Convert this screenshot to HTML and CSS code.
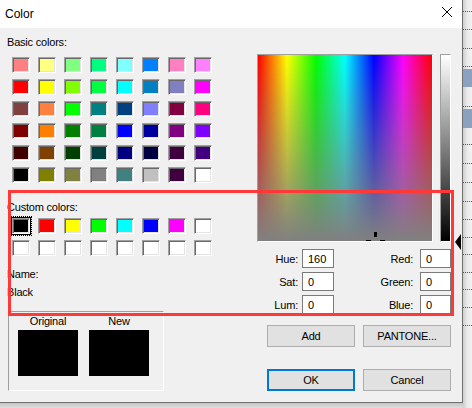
FILE: index.html
```html
<!DOCTYPE html>
<html>
<head>
<meta charset="utf-8">
<link rel="stylesheet" href="styles.css">
</head>
<body>
<div class="screen">
  <div class="main">
    <div class="dialog">
      <div class="titlebar">
        <span class="title">Color</span>
        <svg class="close" viewBox="0 0 10 10" shape-rendering="crispEdges"><path d="M0 0L10 10M10 0L0 10" stroke="#000" stroke-width="1" fill="none"/></svg>
      </div>
      <div class="content">
        <div class="left">
          <div class="label">Basic colors:</div>
          <div class="swatches basic">
            <span class="sw" style="background:#ff8080"></span><span class="sw" style="background:#ffff80"></span><span class="sw" style="background:#80ff80"></span><span class="sw" style="background:#00ff80"></span><span class="sw" style="background:#80ffff"></span><span class="sw" style="background:#0080ff"></span><span class="sw" style="background:#ff80c0"></span><span class="sw" style="background:#ff80ff"></span>
            <span class="sw" style="background:#ff0000"></span><span class="sw" style="background:#ffff00"></span><span class="sw" style="background:#80ff00"></span><span class="sw" style="background:#00ff40"></span><span class="sw" style="background:#00ffff"></span><span class="sw" style="background:#0080c0"></span><span class="sw" style="background:#8080c0"></span><span class="sw" style="background:#ff00ff"></span>
            <span class="sw" style="background:#804040"></span><span class="sw" style="background:#ff8040"></span><span class="sw" style="background:#00ff00"></span><span class="sw" style="background:#008080"></span><span class="sw" style="background:#004080"></span><span class="sw" style="background:#8080ff"></span><span class="sw" style="background:#800040"></span><span class="sw" style="background:#ff0080"></span>
            <span class="sw" style="background:#800000"></span><span class="sw" style="background:#ff8000"></span><span class="sw" style="background:#008000"></span><span class="sw" style="background:#008040"></span><span class="sw" style="background:#0000ff"></span><span class="sw" style="background:#0000a0"></span><span class="sw" style="background:#800080"></span><span class="sw" style="background:#8000ff"></span>
            <span class="sw" style="background:#400000"></span><span class="sw" style="background:#804000"></span><span class="sw" style="background:#004000"></span><span class="sw" style="background:#004040"></span><span class="sw" style="background:#000080"></span><span class="sw" style="background:#000040"></span><span class="sw" style="background:#400040"></span><span class="sw" style="background:#400080"></span>
            <span class="sw" style="background:#000000"></span><span class="sw" style="background:#808000"></span><span class="sw" style="background:#808040"></span><span class="sw" style="background:#808080"></span><span class="sw" style="background:#408080"></span><span class="sw" style="background:#c0c0c0"></span><span class="sw" style="background:#400040"></span><span class="sw" style="background:#ffffff"></span>
          </div>
          <div class="label lbl-custom">Custom colors:</div>
          <div class="swatches custom">
            <span class="sw sel" style="background:#000000"></span><span class="sw" style="background:#ff0000"></span><span class="sw" style="background:#ffff00"></span><span class="sw" style="background:#00ff00"></span><span class="sw" style="background:#00ffff"></span><span class="sw" style="background:#0000ff"></span><span class="sw" style="background:#ff00ff"></span><span class="sw" style="background:#ffffff"></span>
            <span class="sw" style="background:#ffffff"></span><span class="sw" style="background:#ffffff"></span><span class="sw" style="background:#ffffff"></span><span class="sw" style="background:#ffffff"></span><span class="sw" style="background:#ffffff"></span><span class="sw" style="background:#ffffff"></span><span class="sw" style="background:#ffffff"></span><span class="sw" style="background:#ffffff"></span>
          </div>
          <div class="label lbl-name">Name:</div>
          <div class="label lbl-black">Black</div>
          <div class="group">
            <div class="preview"><div class="plabel">Original</div><div class="pbox"></div></div>
            <div class="preview"><div class="plabel">New</div><div class="pbox"></div></div>
          </div>
        </div>
        <div class="right">
          <div class="pickers">
            <div class="spectrum">
              <i class="cross cross-t"></i><i class="cross cross-l"></i><i class="cross cross-r"></i>
            </div>
            <div class="lumwrap"><div class="lum"></div><i class="pointer"></i></div>
          </div>
          <div class="fields">
            <div class="flabel fa">Hue:</div><div class="input">160</div><div class="flabel fb">Red:</div><div class="input">0</div>
            <div class="flabel fa">Sat:</div><div class="input">0</div><div class="flabel fb">Green:</div><div class="input">0</div>
            <div class="flabel fa">Lum:</div><div class="input">0</div><div class="flabel fb">Blue:</div><div class="input">0</div>
          </div>
          <div class="btnrow first">
            <div class="btn">Add</div><div class="btn">PANTONE...</div>
          </div>
          <div class="btnrow second">
            <div class="btn ok">OK</div><div class="btn">Cancel</div>
          </div>
        </div>
      </div>
      <div class="annot"></div>
    </div>
    <div class="shadow"></div>
  </div>
  <div class="strip">
    <div class="row r12"></div>
    <div class="row r18"></div>
    <div class="row r19"></div>
    <div class="row r18"></div>
    <div class="gap g2"></div>
    <div class="selrow r18"></div>
    <div class="row r20"></div>
    <div class="gap g2"></div>
    <div class="selrow r19"></div>
    <div class="row r17"></div>
    <div class="row r19"></div>
    <div class="row r19"></div>
    <div class="row r19"></div>
    <div class="row r18"></div>
    <div class="row r18"></div>
    <div class="row r17"></div>
    <div class="row r18"></div>
    <div class="row r17"></div>
    <div class="row r18"></div>
    <div class="row r18"></div>
  </div>
</div>
</body>
</html>
```

FILE: styles.css
```css
body {
  margin: 0;
  width: 472px;
  height: 408px;
  overflow: hidden;
  font-family: "Liberation Sans", Arial, sans-serif;
  font-size: 11px;
  color: #000;
}

.screen {
  display: flex;
  width: 472px;
  height: 408px;
}

.main {
  width: 463px;
  display: flex;
  flex-direction: column;
  flex: none;
}

.dialog {
  position: relative;
  width: 463px;
  height: 403px;
  box-sizing: border-box;
  border-right: 1px solid #6f6f6f;
  border-bottom: 1px solid #6f6f6f;
  background: #f0f0f0;
  display: flex;
  flex-direction: column;
}

.shadow {
  flex: 1;
  background: linear-gradient(#c4c4c4, #dedede);
}

.titlebar {
  height: 28px;
  flex: none;
  background: #fff;
  display: flex;
  justify-content: space-between;
  align-items: flex-start;
  padding: 7px 10px 0 5px;
  box-sizing: border-box;
}

.title {
  font-size: 12px;
  line-height: 14px;
}

.close {
  width: 10px;
  height: 10px;
  display: block;
}

.content {
  display: flex;
  flex: 1;
}

.left {
  width: 257px;
  flex: none;
  display: flex;
  flex-direction: column;
  align-items: flex-start;
  padding-top: 8px;
}

.label {
  line-height: 13px;
  margin-left: 7px;
  letter-spacing: -0.2px;
  white-space: nowrap;
}

.swatches {
  display: grid;
  grid-template-columns: repeat(8, 18px);
  grid-auto-rows: 16px;
  column-gap: 8px;
  row-gap: 6px;
  margin-left: 12px;
}

.basic { margin-top: 8px; }
.lbl-custom { margin-top: 18px; }
.custom { margin-top: 4px; }
.lbl-name { margin-top: 12px; }
.lbl-black { margin-top: 5px; }

.sw {
  display: block;
  box-sizing: border-box;
  width: 18px;
  height: 16px;
  border: 1px solid;
  border-color: #a0a0a0 #fff #fff #a0a0a0;
  box-shadow: inset 1px 1px #696969, inset -1px -1px #e3e3e3;
}

.sw.sel {
  box-shadow: 0 0 0 1px #000, inset 1px 1px #696969, inset -1px -1px #e3e3e3;
  outline: 1px dotted #000;
  outline-offset: 1px;
}

.group {
  margin: 12px 0 0 8px;
  width: 156px;
  height: 80px;
  box-sizing: border-box;
  border: 1px solid;
  border-color: #a0a0a0 #fff #fff #a0a0a0;
  display: flex;
  gap: 11px;
  padding: 3px 0 0 9px;
}

.preview {
  display: flex;
  flex-direction: column;
  align-items: center;
  width: 60px;
}

.plabel {
  line-height: 13px;
  letter-spacing: -0.2px;
}

.pbox {
  width: 60px;
  height: 46px;
  margin-top: 2px;
  background: #000;
}

.right {
  flex: 1;
  display: flex;
  flex-direction: column;
  padding-top: 26px;
}

.pickers {
  display: flex;
  gap: 7px;
  align-items: flex-start;
}

.spectrum {
  position: relative;
  overflow: hidden;
  width: 176px;
  height: 188px;
  box-sizing: border-box;
  border: 1px solid;
  border-color: #a0a0a0 #fff #fff #a0a0a0;
  background:
    linear-gradient(to bottom, rgba(128,128,128,0), #808080),
    linear-gradient(to right, #f00, #ff0, #0f0, #0ff, #00f, #f0f, #f00);
}

.cross {
  position: absolute;
  background: #000;
}
.cross-t { left: 116px; top: 177px; width: 3px; height: 5px; }
.cross-l { left: 108px; top: 185px; width: 5px; height: 3px; }
.cross-r { left: 122px; top: 185px; width: 5px; height: 3px; }

.lumwrap {
  position: relative;
  width: 11px;
  height: 188px;
}

.lum {
  height: 100%;
  box-sizing: border-box;
  border: 1px solid;
  border-color: #a0a0a0 #fff #fff #a0a0a0;
  background: linear-gradient(#fff, #000);
}

.pointer {
  position: absolute;
  left: 15px;
  top: 180px;
  width: 0;
  height: 0;
  border-style: solid;
  border-width: 8px 6px 8px 0;
  border-color: transparent #000 transparent transparent;
}

.fields {
  display: grid;
  grid-template-columns: 45px 32px 86px 31px;
  grid-auto-rows: 19px;
  row-gap: 4px;
  margin-top: 7px;
}

.flabel {
  text-align: right;
  padding-top: 3px;
  line-height: 15px;
  letter-spacing: -0.2px;
}
.fa { padding-right: 4px; }
.fb { padding-right: 7px; }

.input {
  box-sizing: border-box;
  border: 1px solid #7a7a7a;
  background: #fff;
  padding: 2px 0 0 5px;
  line-height: 15px;
  overflow: hidden;
}

.btnrow {
  display: flex;
  gap: 8px;
  margin-left: 10px;
}
.btnrow.first { margin-top: 11px; }
.btnrow.second { margin-top: 22px; }

.btn {
  width: 88px;
  height: 22px;
  box-sizing: border-box;
  border: 1px solid #adadad;
  background: #e1e1e1;
  text-align: center;
  line-height: 20px;
  letter-spacing: -0.2px;
}

.btn.ok {
  border: 2px solid #0078d7;
  line-height: 18px;
}

.annot {
  position: absolute;
  left: 8px;
  top: 190px;
  width: 446px;
  height: 126px;
  box-sizing: border-box;
  border: 3px solid #ff3838;
  pointer-events: none;
}

.strip {
  width: 9px;
  height: 408px;
  flex: none;
  display: flex;
  flex-direction: column;
  background: linear-gradient(to right, #cfcfcf, #ebebeb 50%, #f2f2f2);
}

.row {
  box-sizing: border-box;
  border-bottom: 1px dotted #555;
  flex: none;
}
.selrow {
  flex: none;
  background: #8ba1bf;
}
.gap { flex: none; }
.g2 { height: 2px; }
.r12 { height: 12px; }
.r17 { height: 17px; }
.r18 { height: 18px; }
.r19 { height: 19px; }
.r20 { height: 20px; }
```
